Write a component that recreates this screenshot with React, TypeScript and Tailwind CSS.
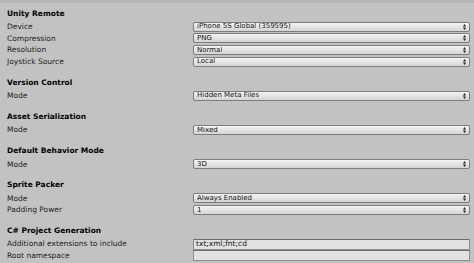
import React from 'react';

type Row = { label: string; value: string; kind?: 'popup' | 'text' };
type Section = { title: string; rows: Row[] };

const SECTIONS: Section[] = [
  {
    title: 'Unity Remote',
    rows: [
      { label: 'Device', value: 'iPhone 5S Global (359595)' },
      { label: 'Compression', value: 'PNG' },
      { label: 'Resolution', value: 'Normal' },
      { label: 'Joystick Source', value: 'Local' },
    ],
  },
  { title: 'Version Control', rows: [{ label: 'Mode', value: 'Hidden Meta Files' }] },
  { title: 'Asset Serialization', rows: [{ label: 'Mode', value: 'Mixed' }] },
  { title: 'Default Behavior Mode', rows: [{ label: 'Mode', value: '3D' }] },
  {
    title: 'Sprite Packer',
    rows: [
      { label: 'Mode', value: 'Always Enabled' },
      { label: 'Padding Power', value: '1' },
    ],
  },
  {
    title: 'C# Project Generation',
    rows: [
      { label: 'Additional extensions to include', value: 'txt;xml;fnt;cd', kind: 'text' },
      { label: 'Root namespace', value: '', kind: 'text' },
    ],
  },
];

const PopupArrows = () => (
  <svg width="3" height="6" viewBox="0 0 3 6" className="shrink-0">
    <path d="M1.5 0 L3 2.4 L0 2.4 Z" fill="#1a1a1a" />
    <path d="M1.5 6 L3 3.6 L0 3.6 Z" fill="#1a1a1a" />
  </svg>
);

const Popup = ({ value }: { value: string }) => (
  <div className="h-[10px] flex items-center justify-between rounded-[2px] border border-[#7d7d7d] bg-gradient-to-b from-[#f4f4f4] to-[#d4d4d4] pl-[3px] pr-[3px] text-[7px] leading-none text-[#111]">
    <span className="truncate">{value}</span>
    <PopupArrows />
  </div>
);

const TextField = ({ value }: { value: string }) => (
  <div className="h-[11px] flex items-center border border-[#8c8c8c] border-t-[#6e6e6e] bg-[#e2e2e2] pl-[2px] text-[7.5px] leading-none text-[#111]">
    {value}
  </div>
);

export default function App() {
  return (
    <div
      className="w-[474px] h-[263px] overflow-hidden bg-[#c2c2c2] text-[#1c1c1c]"
      style={{ fontFamily: '"DejaVu Sans", Verdana, sans-serif' }}
    >
      <div className="h-[3px] bg-[#b6b6b6]" />
      <div className="pt-[4px] pl-[7px] pr-[4px] flex flex-col gap-[8.5px]">
        {SECTIONS.map((section) => (
          <div key={section.title}>
            <div className="h-[14px] pb-px flex items-center text-[7.5px] font-bold text-black leading-none">
              {section.title}
            </div>
            {section.rows.map((row) => (
              <div key={row.label} className="h-[11.67px] grid grid-cols-[186px_1fr] items-center">
                <span className="text-[7.5px] leading-none whitespace-nowrap">{row.label}</span>
                {row.kind === 'text' ? <TextField value={row.value} /> : <Popup value={row.value} />}
              </div>
            ))}
          </div>
        ))}
      </div>
    </div>
  );
}
